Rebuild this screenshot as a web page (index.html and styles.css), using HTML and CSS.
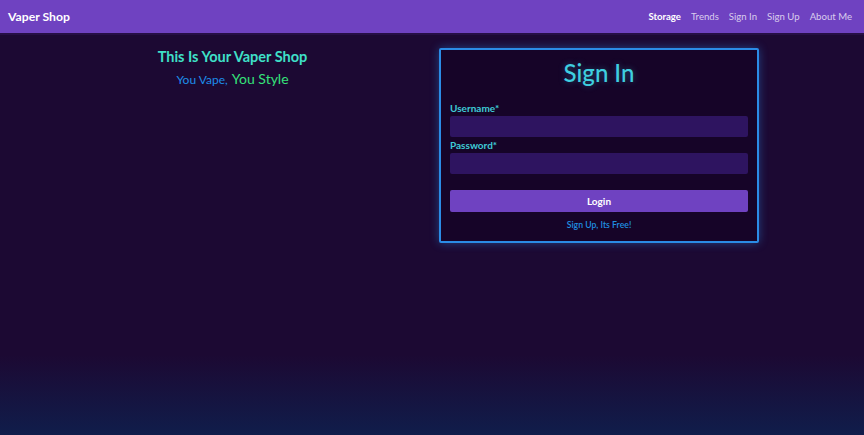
FILE: index.html
```html
<!DOCTYPE html>
<html>
<head>
<meta charset="utf-8">
<link rel="stylesheet" href="styles.css">
</head>
<body>
<nav class="navbar">
  <a class="brand">Vaper Shop</a>
  <ul class="nav-links">
    <li class="active">Storage</li>
    <li>Trends</li>
    <li>Sign In</li>
    <li>Sign Up</li>
    <li>About Me</li>
  </ul>
</nav>
<main class="main">
  <section class="intro">
    <h2 class="intro-title">This Is Your Vaper Shop</h2>
    <p class="intro-sub"><span class="blue">You Vape,</span> <span class="green">You Style</span></p>
  </section>
  <section class="card">
    <h1 class="card-title">Sign In</h1>
    <form class="form">
      <label class="label">Username*</label>
      <div class="input"></div>
      <label class="label">Password*</label>
      <div class="input"></div>
      <button type="button" class="btn">Login</button>
      <a class="signup">Sign Up, Its Free!</a>
    </form>
  </section>
</main>
</body>
</html>
```
FILE: styles.css
```css
* { box-sizing: border-box; }
html, body { margin: 0; padding: 0; height: 100%; }
body {
  font-family: Lato, "Open Sans", sans-serif;
  background: linear-gradient(to bottom, #1c0933 0px, #1c0933 355px, #101d4b 435px);
  min-height: 435px;
  overflow: hidden;
}
.navbar {
  height: 33px;
  background: #6f42c1;
  display: flex;
  align-items: center;
  justify-content: space-between;
  padding: 0 12px 0 8px;
  border-bottom: 2px solid #260f45;
  box-sizing: content-box;
}
.brand {
  color: #fff;
  font-weight: 700;
  font-size: 12.2px;
  margin-top: -1px;
}
.nav-links {
  list-style: none;
  display: flex;
  gap: 10px;
  margin: 0;
  padding: 0;
  margin-top: -1px;
}
.nav-links li {
  font-size: 9.6px;
  color: rgba(255,255,255,0.74);
}
.nav-links li.active { color: #fff; font-weight: 700; }
.main {
  display: flex;
  align-items: flex-start;
  padding-top: 13px;
}
.intro {
  flex: 0 0 439px;
  padding-left: 26px;
  text-align: center;
}
.intro-title {
  margin: 0;
  font-size: 14.5px;
  font-weight: 700;
  color: #3fe0c8;
  line-height: 20px;
  margin-top: -1px;
}
.intro-sub {
  margin: 2px 0 0;
  line-height: 18px;
}
.blue { color: #1c8eea; font-size: 12px; }
.green { color: #35e27a; font-size: 14px; }
.card {
  width: 320px;
  height: 195px;
  background: #160428;
  border: 2px solid #2b8ce6;
  border-radius: 2px;
  box-shadow: 0 0 10px rgba(43,140,230,0.45);
  padding: 0 9px;
}
.card-title {
  margin: 8px 0 0;
  text-align: center;
  font-size: 24px;
  font-weight: 500;
  color: #3fcfe0;
  line-height: 30px;
  text-shadow: 0 0 6px rgba(63,207,224,0.35);
}
.form { display: flex; flex-direction: column; margin-top: 15px; }
.label {
  font-size: 10px;
  font-weight: 700;
  color: #3ecbd6;
  line-height: 11px;
}
.input {
  height: 21px;
  background: #2e1460;
  border-radius: 2px;
  margin: 2px 0 3px;
}
.btn {
  margin-top: 13px;
  height: 22px;
  border: none;
  border-radius: 2px;
  background: #6f42c1;
  color: #fff;
  font-family: Lato, sans-serif;
  font-weight: 700;
  font-size: 10px;
  padding: 0;
}
.signup {
  margin-top: 7px;
  text-align: center;
  font-size: 8.7px;
  font-weight: 600;
  color: #1f8fe0;
  line-height: 12px;
}
```
